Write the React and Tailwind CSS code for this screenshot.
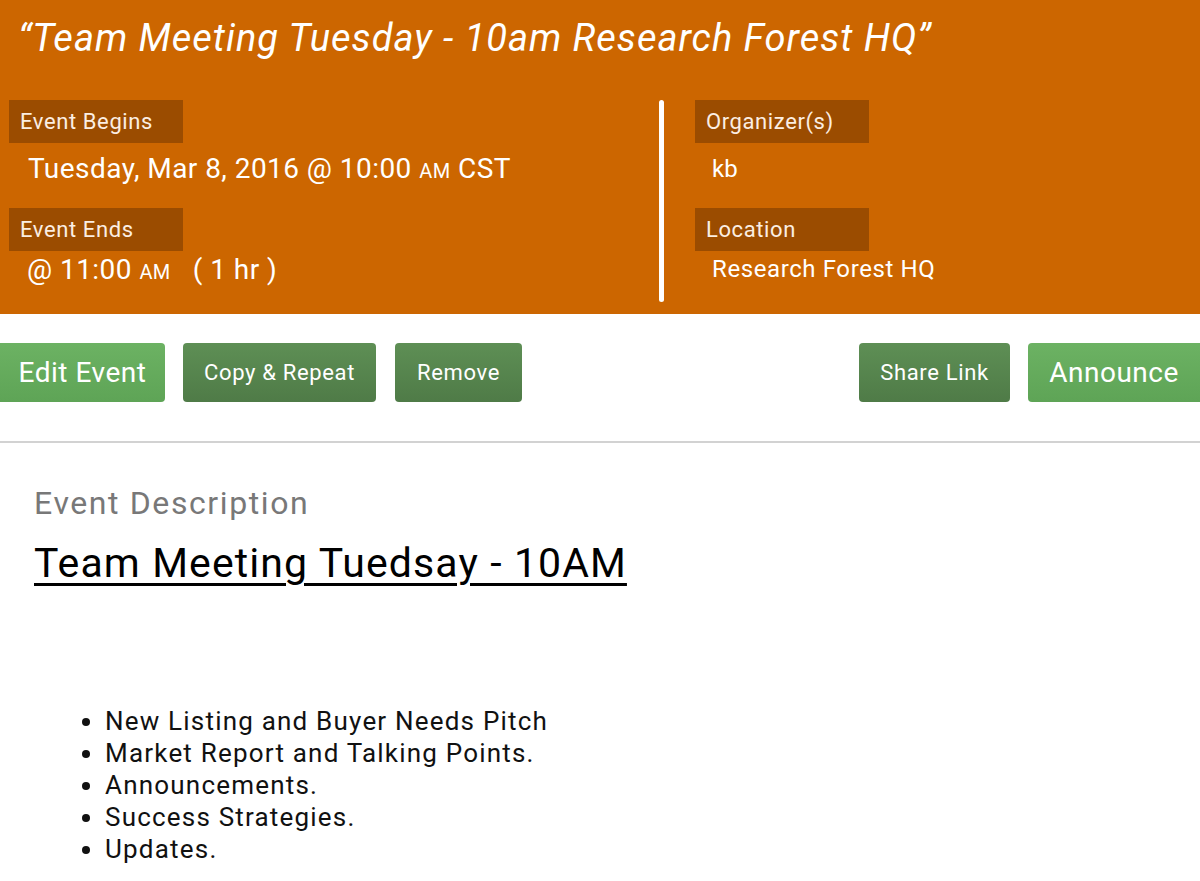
import React from 'react';

const Label = ({ children }) => (
  <div className="flex h-[43px] w-[174px] items-center bg-[#9b4c00] pl-[11px] text-[22px] tracking-[0.6px] text-[#fbeee2]">
    {children}
  </div>
);

const Btn = ({ children, light, className = '' }) => (
  <button
    className={`flex h-[59px] items-center justify-center text-white ${
      light
        ? 'bg-gradient-to-b from-[#6cb263] to-[#5ea456] text-[28px] tracking-[0.5px]'
        : 'bg-gradient-to-b from-[#5e8f55] to-[#4f7b47] text-[22px] tracking-[0.65px]'
    } ${className}`}
  >
    {children}
  </button>
);

const App = () => {
  const items = [
    'New Listing and Buyer Needs Pitch',
    'Market Report and Talking Points.',
    'Announcements.',
    'Success Strategies.',
    'Updates.',
  ];
  return (
    <div className="min-h-[881px] w-[1200px] bg-white font-['Roboto',sans-serif]">
      <div className="h-[314px] bg-[#cc6600] text-white">
        <h1 className="px-[18px] pt-[14px] text-[38px] italic leading-[48px] tracking-[1px]">
          “Team Meeting Tuesday - 10am Research Forest HQ”
        </h1>
        <div className="mt-[38px] flex">
          <div className="ml-[9px] w-[650px]">
            <Label>Event Begins</Label>
            <div className="h-[65px] pl-[19px] pt-[8px] text-[28px] leading-[36px] tracking-[0.45px]">
              Tuesday, Mar 8, 2016 @ 10:00 <span className="text-[20px]">AM</span> CST
            </div>
            <Label>Event Ends</Label>
            <div className="pl-[18px] pt-[1px] text-[28px] leading-[36px] tracking-[0.45px]">
              @ 11:00 <span className="text-[20px]">AM</span>
              <span className="ml-[22px]">( 1 hr )</span>
            </div>
          </div>
          <div className="h-[202px] w-[5px] rounded-full bg-white" />
          <div className="ml-[31px]">
            <Label>Organizer(s)</Label>
            <div className="h-[65px] pl-[17px] pt-[8px] text-[24px] leading-[36px]">kb</div>
            <Label>Location</Label>
            <div className="pl-[17px] pt-0 text-[24px] leading-[36px] tracking-[0.6px]">
              Research Forest HQ
            </div>
          </div>
        </div>
      </div>

      <div className="mt-[29px] flex items-center">
        <Btn light className="w-[165px] rounded-r-[4px]">Edit Event</Btn>
        <Btn className="ml-[18px] w-[193px] rounded-[4px]">Copy &amp; Repeat</Btn>
        <Btn className="ml-[19px] w-[127px] rounded-[4px]">Remove</Btn>
        <div className="grow" />
        <Btn className="w-[151px] rounded-[4px]">Share Link</Btn>
        <Btn light className="ml-[18px] w-[172px] rounded-l-[4px]">Announce</Btn>
      </div>

      <div className="mt-[39px] h-[2px] bg-[#d2d2d2]" />

      <div className="px-[34px]">
        <h2 className="mt-[40px] text-[32px] leading-[40px] tracking-[1.6px] text-[#787878]">Event Description</h2>
        <h3 className="mt-[16px] text-[41px] leading-[48px] tracking-[1.1px] text-black underline decoration-[3px] underline-offset-[6px]">
          Team Meeting Tuedsay - 10AM
        </h3>
        <ul className="ml-[37px] mt-[118px] list-disc pl-[34px] text-[26px] leading-[32px] tracking-[1.2px] text-[#111]">
          {items.map(item => (
            <li key={item}>{item}</li>
          ))}
        </ul>
      </div>
    </div>
  );
};

export default App;
